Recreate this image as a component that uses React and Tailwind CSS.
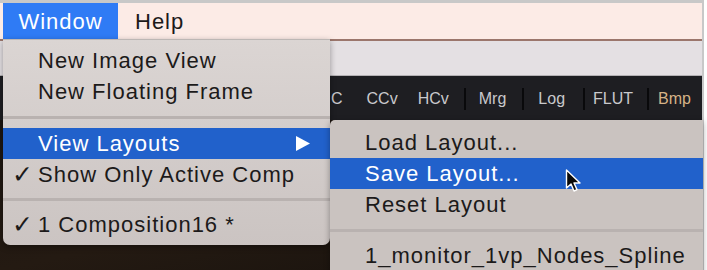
import React from "react";

const font = "font-['Liberation_Sans','Helvetica',sans-serif]";

function Check() {
  return (
    <span className="w-[35px] shrink-0 pl-[9px] font-['DejaVu_Sans',sans-serif] text-[25px] leading-none tracking-normal">
      ✓
    </span>
  );
}

function Item({ label, check, active, arrow }) {
  return (
    <div
      className={`h-[31px] flex items-center text-[22px] tracking-[1px] leading-none ${
        active ? "bg-[#2161cb] text-white" : "text-[#1c1a1a]"
      } ${check ? "" : "pl-[35px]"}`}
    >
      {check && <Check />}
      <span className="flex-1">{label}</span>
      {arrow && (
        <svg width="16" height="15" viewBox="0 0 16 15" className="mr-[19px]">
          <polygon points="1,0 15,7.5 1,15" fill="white" />
        </svg>
      )}
    </div>
  );
}

function Sep({ h = "h-[21px]" }) {
  return (
    <div className={`${h} flex items-center`}>
      <div className="h-[3px] w-full bg-[#b9b2b0]" />
    </div>
  );
}

function Bar() {
  return <span className="block w-[2px] h-[22px] bg-[#09090b]" />;
}

export default function App() {
  return (
    <div className={`relative w-[707px] h-[270px] overflow-hidden bg-white ${font}`}>
      <div className="w-[704px] h-full flex flex-col border-t-[3px] border-r-2 border-[#c8c8c8]">
        {/* menu bar */}
        <div className="h-[36px] shrink-0 flex items-center bg-[#fcebe6] text-[22px] tracking-[1px]">
          <div className="ml-[3px] w-[115px] h-full flex items-center justify-center bg-[#2f7bf5] text-white">
            Window
          </div>
          <span className="ml-[17px] text-[#1c1a1a]">Help</span>
        </div>
        <div className="h-[2px] shrink-0 bg-[#9b766c]" />
        {/* app title strip */}
        <div className="h-[35px] shrink-0 bg-[#e4e0e3] border-b border-[#b4b1b4]" />
        {/* toolbar */}
        <div className="h-[44px] shrink-0 flex items-center bg-[#1e1e22] text-[16px] text-[#c9c9cc] pt-[2px]">
          <span className="ml-[331px]">C</span>
          <span className="ml-[24px]">CCv</span>
          <span className="ml-[20px]">HCv</span>
          <span className="ml-[15px]"><Bar /></span>
          <span className="ml-[13px]">Mrg</span>
          <span className="ml-[16px]"><Bar /></span>
          <span className="ml-[14px]">Log</span>
          <span className="ml-[18px]"><Bar /></span>
          <span className="ml-[8px]">FLUT</span>
          <span className="ml-[14px]"><Bar /></span>
          <span className="ml-[9px] text-[#d6b387]">Bmp</span>
        </div>
        {/* canvas */}
        <div className="flex-1 bg-gradient-to-br from-[#1c1510] via-[#241a12] to-[#15100c]" />
      </div>

      {/* main menu */}
      <div className="absolute left-[3px] top-[39px] w-[327px] h-[206px] pt-[5px] rounded-b-[7px] border-t border-[#bdb7b5] bg-gradient-to-b from-[#dbd5d3] to-[#cbc4c2] shadow-[0_2px_6px_rgba(0,0,0,0.35)]">
        <Item label="New Image View" />
        <Item label="New Floating Frame" />
        <Sep />
        <Item label="View Layouts" active arrow />
        <Item label="Show Only Active Comp" check />
        <Sep h="h-[19px]" />
        <Item label="1 Composition16 *" check />
      </div>

      {/* submenu */}
      <div className="absolute left-[330px] top-[120px] w-[373px] h-[160px] pt-[7px] rounded-tl-[5px] bg-[#cac3c0] shadow-[0_2px_6px_rgba(0,0,0,0.35)]">
        <Item label="Load Layout..." />
        <Item label="Save Layout..." active />
        <Item label="Reset Layout" />
        <Sep h="h-[20px]" />
        <Item label="1_monitor_1vp_Nodes_Spline" />
      </div>

      {/* pointer */}
      <svg
        className="absolute left-[565px] top-[169px]"
        width="18"
        height="26"
        viewBox="0 0 18 26"
      >
        <path
          d="M1.5 1 L1.5 19 L6 15 L9 22 L12 20.6 L9 14 L15 14 Z"
          fill="#0a0a0a"
          stroke="white"
          strokeWidth="1.4"
          strokeLinejoin="round"
        />
      </svg>
    </div>
  );
}
